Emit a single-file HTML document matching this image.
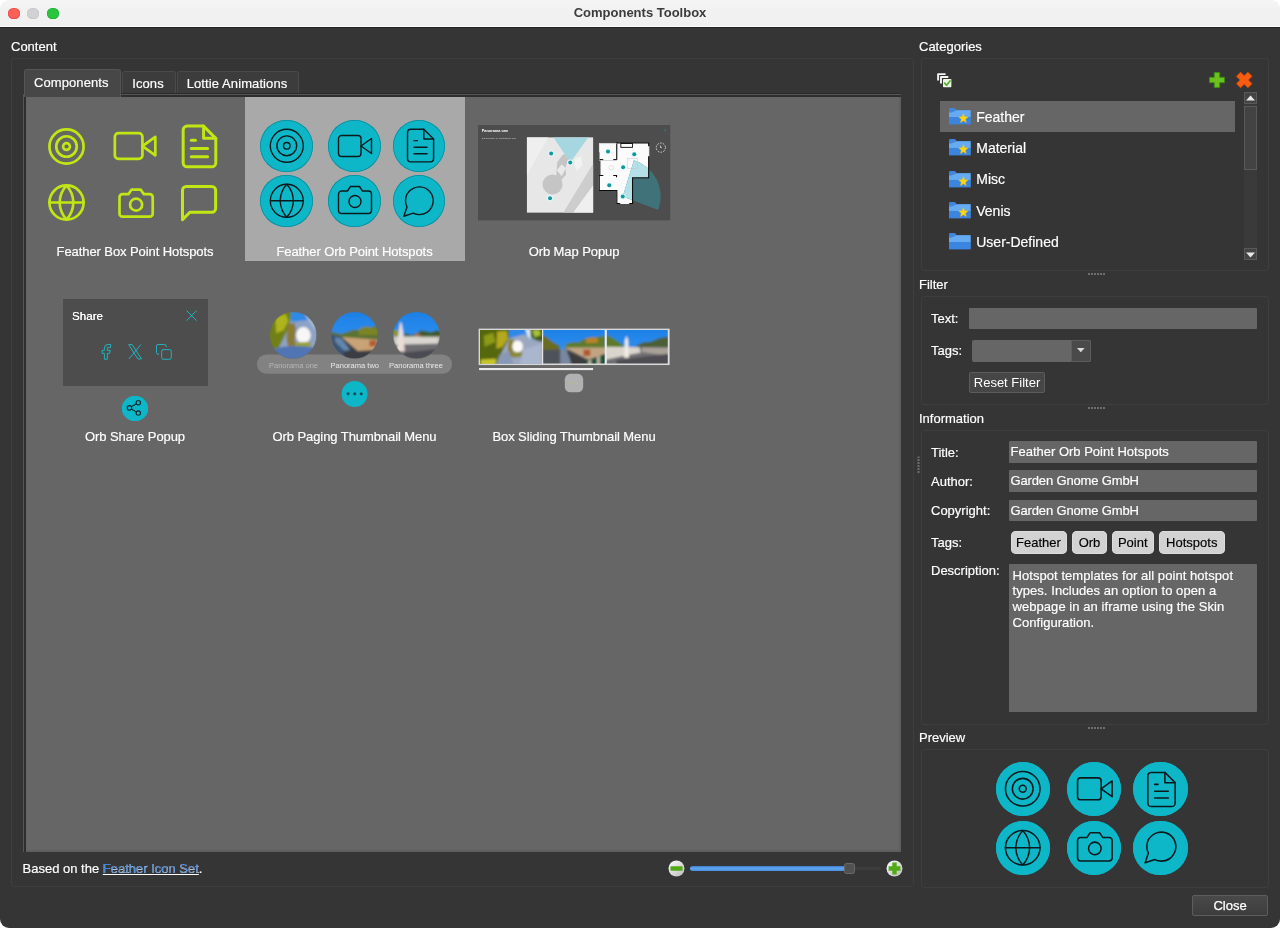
<!DOCTYPE html>
<html lang="en">
<head>
<meta charset="utf-8">
<title>Components Toolbox</title>
<style>
*{box-sizing:border-box;margin:0;padding:0}
html,body{width:1280px;height:928px;overflow:hidden;background:#fff}
body{font-family:"Liberation Sans",sans-serif;font-size:13px;color:#fff;-webkit-font-smoothing:antialiased}
#win{transform:translateZ(0);position:absolute;left:0;top:0;width:1280px;height:928px;background:linear-gradient(#f3f3f3 0,#f3f3f3 27px,#353535 27px);border-radius:9px;overflow:hidden}
#tbar{position:absolute;left:0;top:0;width:1280px;height:27px;background:linear-gradient(#f5f5f5,#f2f2f2 30%,#f0f0f0);border-bottom:1px solid #fdfdfd}
#tline{position:absolute;left:0;top:27px;width:1280px;height:1.3px;background:#222}
.tl{position:absolute;top:7.7px;width:11.7px;height:11.7px;border-radius:50%}
#ttl{position:absolute;left:0;width:1280px;top:4.7px;text-align:center;font-weight:bold;font-size:13px;color:#3b3b3b;letter-spacing:0}
.abs{position:absolute}
.lbl{position:absolute;white-space:nowrap;color:#fff;font-size:13px;line-height:15px}
.gb{position:absolute;border:1px solid #3e3e3e;border-radius:3px}
.field{position:absolute;background:linear-gradient(#666,#666);border-radius:1px;color:#fff;font-size:13px;line-height:21px;padding-left:2px;white-space:nowrap;overflow:hidden}
.tab{letter-spacing:.1px;padding-right:2px;position:absolute;background:linear-gradient(#3c3c3c,#3c3c3c);border:1px solid #4a4a4a;border-bottom:none;border-radius:3px 3px 0 0;text-align:center;font-size:13px;color:#fff}
.tile-l{letter-spacing:-.08px;position:absolute;width:220px;text-align:center;font-size:13px;line-height:15px;color:#fff;white-space:nowrap}
.orb{position:absolute;border-radius:50%;background:#0db7c8}
svg{position:absolute;overflow:visible}
svg svg{overflow:hidden}
.lbl,.tile-l,.row,.field,.tab{-webkit-text-stroke:.18px #fff}
.chip{-webkit-text-stroke:.15px #000}
.fi{fill:none;stroke-linecap:round;stroke-linejoin:round}
.dots{position:absolute;width:17px;height:2px;background:repeating-linear-gradient(90deg,#6e6e6e 0 2px,transparent 2px 3px)}
.chip{position:absolute;top:531px;height:23px;background:linear-gradient(#d2d2d2,#d2d2d2);border-radius:5px;color:#000;font-size:13px;line-height:23px;text-align:center;box-shadow:0 0 0 .5px #e6e6e6 inset}
.row{position:absolute;left:976.25px;font-size:14px;line-height:16px;color:#fff;white-space:nowrap}
</style>
</head>
<body>
<div id="win">
  <!-- title bar -->
  <div id="tbar">
    <div class="tl" style="left:8px;background:#fe5f57;box-shadow:0 0 0 .5px #e2463f inset"></div>
    <div class="tl" style="left:27.3px;background:#d1d0d2;box-shadow:0 0 0 .5px #c3c2c4 inset"></div>
    <div class="tl" style="left:47.1px;background:#29c440;box-shadow:0 0 0 .5px #1fa82f inset"></div>
    <div id="ttl">Components Toolbox</div>
  </div>
  <div id="tline"></div>

  <!-- ============ CONTENT ============ -->
  <div class="lbl" style="left:11px;top:38.75px">Content</div>
  <div class="gb" style="left:11px;top:58px;width:902.7px;height:829px"></div>

  <!-- tabs -->
  <div class="tab" style="left:122px;top:71px;width:54px;height:23px;line-height:23px">Icons</div>
  <div class="tab" style="left:177px;top:71px;width:122px;height:23px;line-height:23px">Lottie Animations</div>
  <div class="abs" style="left:23px;top:93px;width:878px;height:1.2px;background:#2a2a2a"></div>
  <div class="abs" style="left:23px;top:94.1px;width:878px;height:757.9px;background:#565656"></div>
  <div class="abs" style="left:24.2px;top:95.4px;width:876.8px;height:756.6px;background:#2e2e2e"></div>
  <div class="abs" style="left:25.5px;top:96.6px;width:875.5px;height:755.4px;background:#5f5f5f"></div>
  <div class="tab" style="left:23.5px;top:69px;width:97.5px;height:27.6px;line-height:25px;background:linear-gradient(#474747,#474747);border-color:#555">Components</div>

  <!-- list pane -->
  <div id="pane" class="abs" style="left:25.5px;top:96.6px;width:873.5px;height:753.4px;background:#666"></div>
  <div class="abs" style="left:244.75px;top:96.6px;width:219.75px;height:164px;background:#a9a9a9"></div>

  <svg class="fi" style="left:46.18px;top:125.88px" width="41.04" height="41.04" viewBox="0 0 24 24" stroke="#c0e714" stroke-width="1.579" ><circle cx="12" cy="12" r="10"/><circle cx="12" cy="12" r="6"/><circle cx="12" cy="12" r="2"/></svg>
<svg class="fi" style="left:113.12px;top:124.02px" width="44.16" height="44.16" viewBox="0 0 24 24" stroke="#c0e714" stroke-width="1.467" ><polygon points="23 7 16 12 23 17 23 7"/><rect x="1" y="5" width="15" height="14" rx="2" ry="2"/></svg>
<svg class="fi" style="left:174.92px;top:121.77px" width="48.96" height="48.96" viewBox="0 0 24 24" stroke="#c0e714" stroke-width="1.471" ><path d="M14 2H6a2 2 0 0 0-2 2v16a2 2 0 0 0 2 2h12a2 2 0 0 0 2-2V8z"/><polyline points="14 2 14 8 20 8"/><line x1="16" y1="13" x2="8" y2="13"/><line x1="16" y1="17" x2="8" y2="17"/><polyline points="10 9 9 9 8 9"/></svg>
<svg class="fi" style="left:46.48px;top:181.78px" width="41.04" height="41.04" viewBox="0 0 24 24" stroke="#c0e714" stroke-width="1.579" ><circle cx="12" cy="12" r="10"/><line x1="2" y1="12" x2="22" y2="12"/><path d="M12 2a15.3 15.3 0 0 1 4 10 15.3 15.3 0 0 1-4 10 15.3 15.3 0 0 1-4-10 15.3 15.3 0 0 1 4-10z"/></svg>
<svg class="fi" style="left:117.68px;top:184.63px" width="36.24" height="36.24" viewBox="0 0 24 24" stroke="#c0e714" stroke-width="1.788" ><path d="M23 19a2 2 0 0 1-2 2H3a2 2 0 0 1-2-2V8a2 2 0 0 1 2-2h4l2-3h6l2 3h4a2 2 0 0 1 2 2z"/><circle cx="12" cy="13" r="4"/></svg>
<svg class="fi" style="left:177.32px;top:181.12px" width="44.16" height="44.16" viewBox="0 0 24 24" stroke="#c0e714" stroke-width="1.630" ><path d="M21 15a2 2 0 0 1-2 2H7l-4 4V5a2 2 0 0 1 2-2h14a2 2 0 0 1 2 2z"/></svg>
<div class="tile-l" style="left:25px;top:244px">Feather Box Point Hotspots</div>
<div class="orb" style="left:260.30px;top:119.50px;width:52.40px;height:52.40px;box-shadow:0 0 0 .8px #0a8c9a inset"></div>
<svg class="fi" style="left:266.70px;top:125.90px" width="39.60" height="39.60" viewBox="0 0 24 24" stroke="#0c1a1d" stroke-width="0.848" ><circle cx="12" cy="12" r="10"/><circle cx="12" cy="12" r="6"/><circle cx="12" cy="12" r="2"/></svg>
<div class="orb" style="left:328.30px;top:119.50px;width:52.40px;height:52.40px;box-shadow:0 0 0 .8px #0a8c9a inset"></div>
<svg class="fi" style="left:337.40px;top:128.00px" width="36.00" height="36.00" viewBox="0 0 24 24" stroke="#0c1a1d" stroke-width="0.933" ><polygon points="23 7 16 12 23 17 23 7"/><rect x="1" y="5" width="15" height="14" rx="2" ry="2"/></svg>
<div class="orb" style="left:393.00px;top:119.50px;width:52.40px;height:52.40px;box-shadow:0 0 0 .8px #0a8c9a inset"></div>
<svg class="fi" style="left:400.54px;top:126.14px" width="39.12" height="39.12" viewBox="0 0 24 24" stroke="#0c1a1d" stroke-width="0.859" ><path d="M14 2H6a2 2 0 0 0-2 2v16a2 2 0 0 0 2 2h12a2 2 0 0 0 2-2V8z"/><polyline points="14 2 14 8 20 8"/><line x1="16" y1="13" x2="8" y2="13"/><line x1="16" y1="17" x2="8" y2="17"/><polyline points="10 9 9 9 8 9"/></svg>
<div class="orb" style="left:260.30px;top:175.00px;width:52.40px;height:52.40px;box-shadow:0 0 0 .8px #0a8c9a inset"></div>
<svg class="fi" style="left:266.70px;top:181.40px" width="39.60" height="39.60" viewBox="0 0 24 24" stroke="#0c1a1d" stroke-width="0.848" ><circle cx="12" cy="12" r="10"/><line x1="2" y1="12" x2="22" y2="12"/><path d="M12 2a15.3 15.3 0 0 1 4 10 15.3 15.3 0 0 1-4 10 15.3 15.3 0 0 1-4-10 15.3 15.3 0 0 1 4-10z"/></svg>
<div class="orb" style="left:328.30px;top:175.00px;width:52.40px;height:52.40px;box-shadow:0 0 0 .8px #0a8c9a inset"></div>
<svg class="fi" style="left:337.40px;top:182.10px" width="36.00" height="36.00" viewBox="0 0 24 24" stroke="#0c1a1d" stroke-width="0.933" ><path d="M23 19a2 2 0 0 1-2 2H3a2 2 0 0 1-2-2V8a2 2 0 0 1 2-2h4l2-3h6l2 3h4a2 2 0 0 1 2 2z"/><circle cx="12" cy="13" r="4"/></svg>
<div class="orb" style="left:393.00px;top:175.00px;width:52.40px;height:52.40px;box-shadow:0 0 0 .8px #0a8c9a inset"></div>
<svg class="fi" style="left:399.34px;top:181.64px" width="39.12" height="39.12" viewBox="0 0 24 24" stroke="#0c1a1d" stroke-width="0.859" ><path d="M21 11.5a8.38 8.38 0 0 1-.9 3.8 8.5 8.5 0 0 1-7.6 4.7 8.38 8.38 0 0 1-3.8-.9L3 21l1.9-5.7a8.38 8.38 0 0 1-.9-3.8 8.5 8.5 0 0 1 4.7-7.6 8.38 8.38 0 0 1 3.8-.9h.5a8.48 8.48 0 0 1 8 8v.5z"/></svg>
<div class="tile-l" style="left:244.5px;top:244px">Feather Orb Point Hotspots</div>
<div class="tile-l" style="left:464px;top:244px">Orb Map Popup</div>
<div class="tile-l" style="left:25px;top:429px">Orb Share Popup</div>
<div class="tile-l" style="left:244.5px;top:429px">Orb Paging Thumbnail Menu</div>
<div class="tile-l" style="left:464px;top:429px">Box Sliding Thumbnail Menu</div>
  <svg style="left:477.75px;top:124.75px" width="192.25" height="95.35" viewBox="477.75 124.75 192.25 95.35"><rect x="477.75" y="124.75" width="192.25" height="95.35" fill="#4d4d4d"/><clipPath id="mapc"><rect x="526.5" y="136.9" width="66.6" height="75.7"/></clipPath><g clip-path="url(#mapc)"><rect x="526.5" y="136.9" width="66.6" height="75.7" fill="#e7e7e7"/><path d="M526.5 136.9H548L526.5 175Z" fill="#efefef"/><path d="M563 212.6L593.1 163V185L573 212.6Z" fill="#cdcdcd"/><path d="M573 212.6L593.1 185V212.6Z" fill="#efefef"/><path d="M575 158l6-2 1 9-5 6-3-6z" fill="#f2f2f2"/><circle cx="552.3" cy="184.3" r="10" fill="#c5c5c5"/><path d="M556 175l1-13 5-7 4-2 2 6-3 9 1 6-5 6z" fill="#c5c5c5"/><path d="M556.5 170l5-6 4 4-4 8z" fill="#e9e9e9"/><path d="M553.1 136.9H588.1L570 162.25Z" fill="#a6d6df"/></g><circle cx="550.9" cy="153.25" r="3.1" fill="#e4f6f8"/><circle cx="550.9" cy="153.25" r="2" fill="#0e9a9c"/><circle cx="570" cy="162.25" r="3.1" fill="#e4f6f8"/><circle cx="570" cy="162.25" r="2" fill="#0e9a9c"/><circle cx="549.75" cy="197.9" r="3.1" fill="#e4f6f8"/><circle cx="549.75" cy="197.9" r="2" fill="#0e9a9c"/><clipPath id="flc"><path d="M598.75 142.9H616.9V142.25H648.75V177.9H632.5V203.5H616.25V190.4H598.5V174.75H600.25V160.4H598.75Z"/></clipPath><path d="M598.75 142.9H616.9V142.25H648.75V177.9H632.5V203.5H616.25V190.4H598.5V174.75H600.25V160.4H598.75Z" fill="#fbfbfb"/><path d="M622.5 196.25L633.7 159.95A38 38 0 0 1 658 209.7Z" fill="#3f7379"/><g clip-path="url(#flc)"><path d="M622.5 196.25L633.7 159.95A38 38 0 0 1 658 209.7Z" fill="#b4e0e8"/></g><g fill="none" stroke="#0b0b0b" stroke-width="1.1" stroke-linejoin="miter"><path d="M616.5 159.6V142.6H648.4V177.6H632.3V203.2H616.6V190.2H599V175.2H616.3V177"/><path d="M599.2 159.4H616.5"/><path d="M599.2 160V152" stroke-width=".9" stroke="#0b0b0b"/><rect x="620.6" y="143.2" width="11.6" height="3.9" stroke-width=".9"/></g><path d="M599.2 159.4V143.3H616.5" fill="none" stroke="#d9d9d9" stroke-width=".7"/><path d="M603 159.4H613M603 175.2H613M620 203.2H629" stroke="#fbfbfb" stroke-width="1.3"/><path d="M648.4 146V156" stroke="#f2f2f2" stroke-width="1.4"/><rect x="627.5" y="158.5" width="10" height="10" fill="none" stroke="#bdbdbd" stroke-width=".4"/><circle cx="611" cy="167.5" r="2.3" fill="none" stroke="#d8b9b9" stroke-width=".4"/><circle cx="607.75" cy="151.25" r="2.9" fill="#e6f8fa"/><circle cx="607.75" cy="151.25" r="2" fill="#0e9a9c"/><circle cx="634" cy="153.9" r="2.9" fill="#e6f8fa"/><circle cx="634" cy="153.9" r="2" fill="#0e9a9c"/><circle cx="622.9" cy="167" r="2.9" fill="#e6f8fa"/><circle cx="622.9" cy="167" r="2" fill="#0e9a9c"/><circle cx="609" cy="184.9" r="2.9" fill="#e6f8fa"/><circle cx="609" cy="184.9" r="2" fill="#0e9a9c"/><circle cx="622.5" cy="196.25" r="2.9" fill="#e6f8fa"/><circle cx="622.5" cy="196.25" r="2" fill="#0e9a9c"/><circle cx="660.6" cy="147.4" r="4.6" fill="none" stroke="#d8d8d8" stroke-width="1" stroke-dasharray="1.6 1.3"/><path d="M660 144.5l1.6 3.4-1.4-.4z" fill="#fff"/><path d="M663.6 128.8l2.6 2.6m0-2.6l-2.6 2.6" stroke="#2a9aa4" stroke-width=".55" opacity=".7"/><text x="481.5" y="132" font-size="3.9" font-weight="bold" fill="#fff" font-family="Liberation Sans,sans-serif" textLength="26.5" lengthAdjust="spacingAndGlyphs">Panorama one</text><text x="481.5" y="138.3" font-size="2.3" fill="#d0d0d0" font-family="Liberation Sans,sans-serif" textLength="34.5" lengthAdjust="spacingAndGlyphs">Description of Panorama one</text></svg>
<div class="abs" style="left:63px;top:298.75px;width:144.75px;height:86.85px;background:#4d4d4d"></div>
<div class="abs" style="left:72px;top:309.3px;font-size:11.6px;line-height:13px;color:#fff;text-shadow:0 0 .3px #fff">Share</div>
<svg class="fi" style="left:181.60px;top:305.90px" width="19.20" height="19.20" viewBox="0 0 24 24" stroke="#21b3bf" stroke-width="1.250" ><line x1="18" y1="6" x2="6" y2="18"/><line x1="6" y1="6" x2="18" y2="18"/></svg>
<svg class="fi" style="left:97.02px;top:342.82px" width="17.76" height="17.76" viewBox="0 0 24 24" stroke="#21b3bf" stroke-width="1.351" ><path d="M18 2h-3a5 5 0 0 0-5 5v3H7v4h3v8h4v-8h3l1-4h-4V7a1 1 0 0 1 1-1h3z"/></svg>
<svg style="left:128px;top:344.2px" width="14.2" height="15.6" viewBox="0 0 14.2 15.6" fill="none" stroke="#21b3bf" stroke-width="1" stroke-linejoin="round"><path d="M.7 .6H4.2L13.5 15H10Z"/><path d="M12.9 .6L.9 15"/></svg>
<svg class="fi" style="left:154.72px;top:343.22px" width="17.76" height="17.76" viewBox="0 0 24 24" stroke="#21b3bf" stroke-width="1.351" ><rect x="9" y="9" width="13" height="13" rx="2" ry="2"/><path d="M5 15H4a2 2 0 0 1-2-2V4a2 2 0 0 1 2-2h9a2 2 0 0 1 2 2v1"/></svg>
<div class="orb" style="left:122.25px;top:395.55px;width:25.90px;height:25.90px;box-shadow:0 0 0 .8px #0db7c8 inset"></div>
<svg class="fi" style="left:125.12px;top:399.17px" width="17.76" height="17.76" viewBox="0 0 24 24" stroke="#0c2a30" stroke-width="1.486" ><circle cx="18" cy="5" r="3"/><circle cx="6" cy="12" r="3"/><circle cx="18" cy="19" r="3"/><line x1="8.59" y1="13.51" x2="15.42" y2="17.49"/><line x1="15.41" y1="6.51" x2="8.59" y2="10.49"/></svg>
<svg style="left:250px;top:305px" width="210" height="110" viewBox="250 305 210 110"><rect x="256.9" y="354.4" width="195.2" height="19.4" rx="9.7" fill="#828282"/><defs><linearGradient id="sky" x1="0" y1="0" x2="0" y2="1"><stop offset="0" stop-color="#1b7fe6"/><stop offset=".6" stop-color="#2f8fee"/><stop offset="1" stop-color="#8cc2f2"/></linearGradient><filter id="bl1" x="-5%" y="-5%" width="110%" height="110%"><feGaussianBlur stdDeviation="12"/></filter><filter id="bl3" x="-5%" y="-5%" width="110%" height="110%"><feGaussianBlur stdDeviation="17"/></filter><clipPath id="c1"><circle cx="312" cy="312" r="250"/></clipPath><clipPath id="c2"><circle cx="967" cy="312" r="250"/></clipPath><clipPath id="c3"><circle cx="502" cy="453" r="363"/></clipPath></defs><svg x="269.8" y="311.8" width="46.9" height="46.9" viewBox="62 62 500 500"><g clip-path="url(#c1)"><g filter="url(#bl1)"><rect x="40" y="40" width="560" height="560" fill="#8fa2c6"/><path d="M240 40H600V260L540 250 470 150 300 170Z" fill="#2f8ae6"/><path d="M420 60l150 40 30 160-60-10-70-100z" fill="#a9bcd8"/><path d="M40 40H290L280 170 230 300 150 460 40 480Z" fill="#6f8012"/><path d="M120 120l110-40 30 80-50 100-80 30z" fill="#aeb41c"/><path d="M250 200l70-20 20 60-10 120 20 100-80 20-30-120z" fill="#8a7a34"/><ellipse cx="420" cy="312" rx="78" ry="88" fill="#f7f7f5"/><path d="M335 390l160-10 10 50-170 20z" fill="#98a032"/><path d="M120 450q180-40 400-10l40 150H100z" fill="#4f74b4"/></g></g></svg><svg x="331.15" y="311.8" width="46.9" height="46.9" viewBox="717 62 500 500"><g clip-path="url(#c2)"><g filter="url(#bl1)"><rect x="700" y="40" width="540" height="560" fill="url(#sky)"/><path d="M700 270l120 30 60-20 80-30 60 10 60-40 60 10 50-20 50 20v130H700z" fill="#5c7230"/><path d="M1010 250l60-30 80 10 70 10v70h-210z" fill="#7c8428"/><path d="M700 300l130 30 170 150 110 60-140 60H700z" fill="#3a5478"/><path d="M830 330l390 30-20 110-190 20z" fill="#c9a274"/><path d="M1125 368h75v62h-75z" fill="#b25a30"/><path d="M830 340l170 140 200-10-40 130H860z" fill="#3a3e44"/><path d="M760 330l70 20 90 120-60 10-100-100z" fill="#6486ac"/></g></g></svg><svg x="393.0" y="311.8" width="46.96" height="46.96" viewBox="139 90 726 726"><g clip-path="url(#c3)"><g filter="url(#bl3)"><rect x="100" y="60" width="800" height="800" fill="url(#sky)"/><path d="M100 380l120-10v100H100z" fill="#8a9424"/><path d="M320 420l120 30 60-20 70-50 90 10 60 20 80-30 100 10v130H320z" fill="#3f5a28"/><path d="M480 430h80v40h-80z" fill="#b46a30"/><path d="M100 470h800v160H100z" fill="#bdb9b4"/><path d="M180 480l320-10 110 20 220 0v110l-330 10-320 60z" fill="#d9d5d0"/><path d="M100 600l800-20v300H100z" fill="#6e6e72"/><path d="M300 720l560-60v200H300z" fill="#4c4c52"/><path d="M260 235l18 60 18 110 26 300H198l26-300 18-110z" fill="#e9ddd6"/></g></g></svg><circle cx="293.3" cy="335.3" r="23.3" fill="none" stroke="#666" stroke-opacity=".4" stroke-width="1"/><circle cx="354.6" cy="335.3" r="23.3" fill="none" stroke="#666" stroke-opacity=".4" stroke-width="1"/><circle cx="416.5" cy="335.3" r="23.3" fill="none" stroke="#666" stroke-opacity=".4" stroke-width="1"/><text x="269" y="368.4" font-size="7.1" fill="#b6b6b6" font-family="Liberation Sans,sans-serif" textLength="49" lengthAdjust="spacingAndGlyphs">Panorama one</text><text x="330.6" y="368.4" font-size="7.1" fill="#e9e9e9" font-family="Liberation Sans,sans-serif" textLength="48.4" lengthAdjust="spacingAndGlyphs">Panorama two</text><text x="389" y="368.4" font-size="7.1" fill="#e9e9e9" font-family="Liberation Sans,sans-serif" textLength="54" lengthAdjust="spacingAndGlyphs">Panorama three</text><circle cx="354.6" cy="394" r="12.95" fill="#0db7c8"/><circle cx="348.1" cy="393.8" r="1.55" fill="#0a4f60"/><circle cx="354.75" cy="393.8" r="1.55" fill="#0a4f60"/><circle cx="361.25" cy="393.8" r="1.55" fill="#0a4f60"/></svg>
<svg style="left:475px;top:325px" width="200" height="72" viewBox="475 325 200 72"><defs><filter id="bb1" x="-5%" y="-5%" width="110%" height="110%"><feGaussianBlur stdDeviation="12"/></filter><filter id="bb2" x="-5%" y="-5%" width="110%" height="110%"><feGaussianBlur stdDeviation="9"/></filter></defs><rect x="479.1" y="329.1" width="190" height="35.5" fill="#dedede"/><svg x="479.9" y="329.9" width="62.1" height="34" viewBox="50 75 795 435" preserveAspectRatio="none"><g filter="url(#bb1)"><rect x="0" y="30" width="900" height="520" fill="#9ca8c0"/><path d="M400 30H720V210L620 130 420 185Z" fill="#2f88e8"/><path d="M630 60l70 10 10 130-50-40z" fill="#dfeaf6"/><path d="M0 30H415L425 180 330 360 265 520H0Z" fill="#56680f"/><path d="M270 95l120-10 20 100-70 110-80 20z" fill="#b4a81e"/><path d="M100 150l120-40 30 120-140 60z" fill="#8c9a18"/><path d="M60 455l200-10-10 80H60z" fill="#c6c62a"/><path d="M695 30H900V235L780 215 700 170Z" fill="#42601a"/><path d="M720 80l90-10 20 70-80 30z" fill="#a8c03a"/><path d="M420 200l60-10-5 90 10 130-50 20-30-110z" fill="#8e8030"/><ellipse cx="532" cy="288" rx="68" ry="78" fill="#fafaf8"/><path d="M470 360l140-5 5 60-140 15z" fill="#8c8a34"/><path d="M600 330l250-80v280H560z" fill="#a9b6cc"/><path d="M300 400l120-60 60 170H260z" fill="#8a98b8"/></g></svg><svg x="542.7" y="330" width="62.05" height="33.6" viewBox="25 55 567 307" preserveAspectRatio="none"><g filter="url(#bb2)"><rect x="-10" y="30" width="640" height="360" fill="url(#sky)"/><path d="M-10 100l60 10 60 50 70 40v60H-10z" fill="#6b6c24"/><path d="M230 190l60-25 60 5 50-30 60-20 60 0 80-15v140H230z" fill="#5f7a2c"/><path d="M420 135l60-12 50 8v40l-110 4z" fill="#b8842a"/><path d="M-10 235h640v160H-10z" fill="#4e5258"/><path d="M185 232l70 0 30 140h-100z" fill="#7888a0"/><path d="M225 215l405 0v60l-190 50z" fill="#c2a484"/><path d="M398 235h62v56h-62z" fill="#b0552c"/><path d="M240 240l200 95-60 40H300z" fill="#3c3c3e"/><path d="M410 340l220-80v130H400z" fill="#25503a"/><path d="M440 335l30-15v60h-30zM520 300l28-12v90h-28z" fill="#b9b4a2"/></g></svg><svg x="606.7" y="330" width="61.05" height="33.6" viewBox="610 55 558 307" preserveAspectRatio="none"><g filter="url(#bb2)"><rect x="580" y="30" width="620" height="360" fill="url(#sky)"/><path d="M580 110l60 0 60 40 60 40v40H580z" fill="#5c7a2a"/><path d="M880 200l60-30 80-10 70-30 110-20v140H880z" fill="#4b5f34"/><path d="M580 210h620v180H580z" fill="#6f6e72"/><path d="M580 208l330 4 10 50-140 25-200 45z" fill="#d9d5cd"/><path d="M930 215l270 5v75l-270-40z" fill="#a9a196"/><path d="M700 330l500-60v130H700z" fill="#4e4e52"/><path d="M792 108l14 40 8 160h-46l8-160z" fill="#efebe3"/></g></svg><rect x="542.1" y="329.5" width="1.1" height="34.6" fill="#e9e9e9"/><rect x="604.9" y="329.5" width="1.7" height="34.6" fill="#e9e9e9"/><rect x="479.1" y="329.1" width="190" height="35.5" fill="none" stroke="#dedede" stroke-width=".9"/><rect x="479.1" y="368" width="114" height="2.1" fill="#ebebeb"/><rect x="564.8" y="373.8" width="18.4" height="18.5" rx="5.5" fill="#b1b1b1"/><circle cx="570.8" cy="383" r=".8" fill="#bccb6a" opacity=".7"/><circle cx="574" cy="383" r=".8" fill="#bccb6a" opacity=".7"/><circle cx="577.2" cy="383" r=".8" fill="#bccb6a" opacity=".7"/></svg>

  <!-- footer -->
  <div class="lbl" style="left:22.5px;top:861px">Based on the <span style="color:#3f82d6;text-decoration:underline">Feather Icon Set</span>.</div>
  <!-- zoom slider -->
  <div class="abs" style="left:689.5px;top:865.5px;width:192px;height:5px;border-radius:2.5px;background:#3d3d3d;box-shadow:0 0 0 .5px #2e2e2e inset"></div>
  <div class="abs" style="left:689.5px;top:865.5px;width:156px;height:5px;border-radius:2.5px;background:linear-gradient(#3a7bd0,#62a6f0 45%,#4a8fe0)"></div>
  <div class="abs" style="left:843.5px;top:862.5px;width:11.5px;height:11.5px;border-radius:2.5px;background:#515151;border:1px solid #6b6b6b"></div>
  <svg style="left:667.5px;top:860px" width="17" height="17" viewBox="0 0 17 17"><defs><linearGradient id="zg" x1="0" y1="0" x2="1" y2="1"><stop offset="0" stop-color="#ffffff"/><stop offset="1" stop-color="#b9b9b9"/></linearGradient></defs><circle cx="8.5" cy="8.5" r="8" fill="url(#zg)"/><rect x="2.4" y="6.3" width="12.2" height="4.4" rx=".8" fill="#50aa14"/></svg>
  <svg style="left:886px;top:860px" width="17" height="17" viewBox="0 0 17 17"><circle cx="8.5" cy="8.5" r="8" fill="url(#zg)"/><path d="M2.6 6.3h3.7V2.6h4.4v3.7h3.7v4.4h-3.7v3.7H6.3v-3.7H2.6z" fill="#50aa14"/></svg>

  <!-- ============ RIGHT ============ -->
  <!-- Categories -->
  <div class="lbl" style="left:919px;top:39px">Categories</div>
  <div class="gb" style="left:921px;top:58px;width:348px;height:213px"></div>
  <div class="abs" style="left:939.5px;top:100.5px;width:295.5px;height:31.5px;background:#666"></div>
  <div class="row" style="top:109px">Feather</div>
  <div class="row" style="top:140.2px">Material</div>
  <div class="row" style="top:171.4px">Misc</div>
  <div class="row" style="top:202.6px">Venis</div>
  <div class="row" style="top:233.6px">User-Defined</div>
  <svg style="left:949.2px;top:108.2px" width="21.6" height="16.2" viewBox="0 0 21.6 16.2"><path d="M0 1.4Q0 0 1.4 0H5.2Q6.2 0 6.8 .9L7.7 2.2H21.6V16.2H0Z" fill="#3f86dc"/><path d="M0 4.6Q3 4.8 5.2 3.6 7 2.4 8.6 2.3H21.6V9.2H0Z" fill="#66abf1"/><rect x="0" y="9" width="21.6" height="7.2" fill="#3b85e0"/><polygon points="14.40,5.70 15.69,8.82 19.06,9.09 16.49,11.28 17.28,14.56 14.40,12.80 11.52,14.56 12.31,11.28 9.74,9.09 13.11,8.82" fill="#fbd712" stroke="#f0b90f" stroke-width=".5" stroke-linejoin="round"/></svg>
<svg style="left:949.2px;top:139.4px" width="21.6" height="16.2" viewBox="0 0 21.6 16.2"><path d="M0 1.4Q0 0 1.4 0H5.2Q6.2 0 6.8 .9L7.7 2.2H21.6V16.2H0Z" fill="#3f86dc"/><path d="M0 4.6Q3 4.8 5.2 3.6 7 2.4 8.6 2.3H21.6V9.2H0Z" fill="#66abf1"/><rect x="0" y="9" width="21.6" height="7.2" fill="#3b85e0"/><polygon points="14.40,5.70 15.69,8.82 19.06,9.09 16.49,11.28 17.28,14.56 14.40,12.80 11.52,14.56 12.31,11.28 9.74,9.09 13.11,8.82" fill="#fbd712" stroke="#f0b90f" stroke-width=".5" stroke-linejoin="round"/></svg>
<svg style="left:949.2px;top:170.6px" width="21.6" height="16.2" viewBox="0 0 21.6 16.2"><path d="M0 1.4Q0 0 1.4 0H5.2Q6.2 0 6.8 .9L7.7 2.2H21.6V16.2H0Z" fill="#3f86dc"/><path d="M0 4.6Q3 4.8 5.2 3.6 7 2.4 8.6 2.3H21.6V9.2H0Z" fill="#66abf1"/><rect x="0" y="9" width="21.6" height="7.2" fill="#3b85e0"/><polygon points="14.40,5.70 15.69,8.82 19.06,9.09 16.49,11.28 17.28,14.56 14.40,12.80 11.52,14.56 12.31,11.28 9.74,9.09 13.11,8.82" fill="#fbd712" stroke="#f0b90f" stroke-width=".5" stroke-linejoin="round"/></svg>
<svg style="left:949.2px;top:201.8px" width="21.6" height="16.2" viewBox="0 0 21.6 16.2"><path d="M0 1.4Q0 0 1.4 0H5.2Q6.2 0 6.8 .9L7.7 2.2H21.6V16.2H0Z" fill="#3f86dc"/><path d="M0 4.6Q3 4.8 5.2 3.6 7 2.4 8.6 2.3H21.6V9.2H0Z" fill="#66abf1"/><rect x="0" y="9" width="21.6" height="7.2" fill="#3b85e0"/><polygon points="14.40,5.70 15.69,8.82 19.06,9.09 16.49,11.28 17.28,14.56 14.40,12.80 11.52,14.56 12.31,11.28 9.74,9.09 13.11,8.82" fill="#fbd712" stroke="#f0b90f" stroke-width=".5" stroke-linejoin="round"/></svg>
<svg style="left:949.2px;top:233.0px" width="21.6" height="16.2" viewBox="0 0 21.6 16.2"><path d="M0 1.4Q0 0 1.4 0H5.2Q6.2 0 6.8 .9L7.7 2.2H21.6V16.2H0Z" fill="#3f86dc"/><path d="M0 4.6Q3 4.8 5.2 3.6 7 2.4 8.6 2.3H21.6V9.2H0Z" fill="#66abf1"/><rect x="0" y="9" width="21.6" height="7.2" fill="#3b85e0"/></svg>
<svg style="left:937px;top:73px" width="15" height="14.5" viewBox="0 0 15 14.5"><path d="M1.1 7.4V1.1H8.6" fill="none" stroke="#f4f4f4" stroke-width="1.9" stroke-linejoin="round"/><path d="M4 10.5V4H11.3" fill="none" stroke="#f4f4f4" stroke-width="1.9" stroke-linejoin="round"/><rect x="6" y="6" width="8.4" height="8.2" rx=".8" fill="#eaf6e2"/><path d="M7.6 10.2l2 2 3.4-4.2" fill="none" stroke="#58ad32" stroke-width="1.7" stroke-linecap="round" stroke-linejoin="round"/></svg>
<svg style="left:1208.5px;top:72px" width="16" height="16" viewBox="0 0 16 16"><path d="M5.3 .5h5.4v4.8h4.8v5.4h-4.8v4.8H5.3v-4.8H.5V5.3h4.8z" fill="#6cc01d" stroke="#3a8a10" stroke-width=".9" stroke-linejoin="round"/></svg>
<svg style="left:1236px;top:72px" width="16.5" height="16" viewBox="0 0 16 16"><path d="M5.3 .5h5.4v4.8h4.8v5.4h-4.8v4.8H5.3v-4.8H.5V5.3h4.8z" fill="#f95c0e" stroke="#d9480a" stroke-width=".7" stroke-linejoin="round" transform="rotate(45 8 8) scale(1.08) translate(-.6 -.6)"/></svg>
  <!-- scrollbar -->
  <div class="abs" style="left:1244px;top:92px;width:13px;height:168px;background:#3a3a3a"></div>
  <div class="abs" style="left:1244px;top:92px;width:13px;height:12px;background:#444;border:1px solid #595959"></div>
  <div class="abs" style="left:1244px;top:105.5px;width:13px;height:64px;background:#434343;border:1px solid #595959"></div>
  <div class="abs" style="left:1244px;top:248px;width:13px;height:12px;background:#444;border:1px solid #595959"></div>
  <svg style="left:1246px;top:95px" width="9" height="6" viewBox="0 0 9 6"><path d="M0 5.5L4.5 .5 9 5.5z" fill="#e8e8e8"/></svg>
  <svg style="left:1246px;top:251.5px" width="9" height="6" viewBox="0 0 9 6"><path d="M0 .5L4.5 5.5 9 .5z" fill="#e8e8e8"/></svg>
  <div class="dots" style="left:1088px;top:273px"></div>

  <!-- Filter -->
  <div class="lbl" style="left:919px;top:277px">Filter</div>
  <div class="gb" style="left:921px;top:295.5px;width:348px;height:109.5px"></div>
  <div class="lbl" style="left:931px;top:311px">Text:</div>
  <div class="field" style="left:968.5px;top:307.5px;width:288px;height:21.5px"></div>
  <div class="lbl" style="left:931px;top:343px">Tags:</div>
  <div class="abs" style="left:971.5px;top:340px;width:119.5px;height:21.5px;background:#666;border-radius:2px"></div>
  <div class="abs" style="left:1071px;top:340px;width:20px;height:21.5px;background:#4a4a4a;border:1px solid #5c5c5c;border-radius:0 2px 2px 0"></div>
  <svg style="left:1077.2px;top:348.3px" width="7.6" height="4.4" viewBox="0 0 9 5"><path d="M0 0h9L4.5 5z" fill="#dcdcdc"/></svg>
  <div class="abs" style="left:969px;top:372px;width:76px;height:21px;background:linear-gradient(#464646,#464646);border:1px solid #5c5c5c;border-radius:2px;text-align:center;line-height:19px;font-size:13px">Reset Filter</div>
  <div class="dots" style="left:1088px;top:407px"></div>

  <!-- Information -->
  <div class="lbl" style="left:919px;top:410.5px">Information</div>
  <div class="gb" style="left:921px;top:430px;width:348px;height:295px"></div>
  <div class="dots" style="left:909.5px;top:464px;transform:rotate(90deg)"></div>
  <div class="lbl" style="left:931px;top:444.5px">Title:</div>
  <div class="field" style="left:1008.5px;top:441px;width:248px;height:21.5px">Feather Orb Point Hotspots</div>
  <div class="lbl" style="left:931px;top:474px">Author:</div>
  <div class="field" style="left:1008.5px;top:470.25px;width:248px;height:21.5px;letter-spacing:-.15px">Garden Gnome GmbH</div>
  <div class="lbl" style="left:931px;top:503px">Copyright:</div>
  <div class="field" style="left:1008.5px;top:499.5px;width:248px;height:21.5px;letter-spacing:-.15px">Garden Gnome GmbH</div>
  <div class="lbl" style="left:931px;top:535px">Tags:</div>
  <div class="chip" style="left:1010.5px;width:56px">Feather</div>
  <div class="chip" style="left:1072px;width:35px">Orb</div>
  <div class="chip" style="left:1112px;width:41.5px">Point</div>
  <div class="chip" style="left:1159px;width:65.5px">Hotspots</div>
  <div class="lbl" style="left:931px;top:563px">Description:</div>
  <div class="field" style="left:1008.5px;top:564px;width:248px;height:147.5px;white-space:normal;line-height:15.6px;padding:3.9px 0 0 4px;letter-spacing:.06px">Hotspot templates for all point hotspot<br>types. Includes an option to open a<br>webpage in an iframe using the Skin<br>Configuration.</div>
  <div class="dots" style="left:1088px;top:726.5px"></div>

  <!-- Preview -->
  <div class="lbl" style="left:919px;top:730px">Preview</div>
  <div class="gb" style="left:921px;top:748.5px;width:348px;height:139px"></div>
  <div class="orb" style="left:995.62px;top:761.88px;width:54.25px;height:54.25px;box-shadow:0 0 0 .8px #0db7c8 inset"></div>
<svg class="fi" style="left:1002.01px;top:768.26px" width="41.47" height="41.47" viewBox="0 0 24 24" stroke="#0c1a1d" stroke-width="0.897" ><circle cx="12" cy="12" r="10"/><circle cx="12" cy="12" r="6"/><circle cx="12" cy="12" r="2"/></svg>
<div class="orb" style="left:1066.62px;top:761.88px;width:54.25px;height:54.25px;box-shadow:0 0 0 .8px #0db7c8 inset"></div>
<svg class="fi" style="left:1075.84px;top:770.46px" width="37.70" height="37.70" viewBox="0 0 24 24" stroke="#0c1a1d" stroke-width="0.987" ><polygon points="23 7 16 12 23 17 23 7"/><rect x="1" y="5" width="15" height="14" rx="2" ry="2"/></svg>
<div class="orb" style="left:1133.38px;top:761.88px;width:54.25px;height:54.25px;box-shadow:0 0 0 .8px #0db7c8 inset"></div>
<svg class="fi" style="left:1140.96px;top:768.51px" width="40.97" height="40.97" viewBox="0 0 24 24" stroke="#0c1a1d" stroke-width="0.908" ><path d="M14 2H6a2 2 0 0 0-2 2v16a2 2 0 0 0 2 2h12a2 2 0 0 0 2-2V8z"/><polyline points="14 2 14 8 20 8"/><line x1="16" y1="13" x2="8" y2="13"/><line x1="16" y1="17" x2="8" y2="17"/><polyline points="10 9 9 9 8 9"/></svg>
<div class="orb" style="left:995.62px;top:820.62px;width:54.25px;height:54.25px;box-shadow:0 0 0 .8px #0db7c8 inset"></div>
<svg class="fi" style="left:1002.01px;top:827.01px" width="41.47" height="41.47" viewBox="0 0 24 24" stroke="#0c1a1d" stroke-width="0.897" ><circle cx="12" cy="12" r="10"/><line x1="2" y1="12" x2="22" y2="12"/><path d="M12 2a15.3 15.3 0 0 1 4 10 15.3 15.3 0 0 1-4 10 15.3 15.3 0 0 1-4-10 15.3 15.3 0 0 1 4-10z"/></svg>
<div class="orb" style="left:1066.62px;top:820.62px;width:54.25px;height:54.25px;box-shadow:0 0 0 .8px #0db7c8 inset"></div>
<svg class="fi" style="left:1075.84px;top:827.75px" width="37.70" height="37.70" viewBox="0 0 24 24" stroke="#0c1a1d" stroke-width="0.987" ><path d="M23 19a2 2 0 0 1-2 2H3a2 2 0 0 1-2-2V8a2 2 0 0 1 2-2h4l2-3h6l2 3h4a2 2 0 0 1 2 2z"/><circle cx="12" cy="13" r="4"/></svg>
<div class="orb" style="left:1133.38px;top:820.62px;width:54.25px;height:54.25px;box-shadow:0 0 0 .8px #0db7c8 inset"></div>
<svg class="fi" style="left:1139.70px;top:827.26px" width="40.97" height="40.97" viewBox="0 0 24 24" stroke="#0c1a1d" stroke-width="0.908" ><path d="M21 11.5a8.38 8.38 0 0 1-.9 3.8 8.5 8.5 0 0 1-7.6 4.7 8.38 8.38 0 0 1-3.8-.9L3 21l1.9-5.7a8.38 8.38 0 0 1-.9-3.8 8.5 8.5 0 0 1 4.7-7.6 8.38 8.38 0 0 1 3.8-.9h.5a8.48 8.48 0 0 1 8 8v.5z"/></svg>

  <!-- Close -->
  <div class="abs" style="left:1192px;top:895px;width:76px;height:21px;background:linear-gradient(#494949,#3d3d3d);border:1px solid #5d5d5d;border-radius:2px;text-align:center;line-height:19px;font-size:13px;-webkit-text-stroke:.25px #fff">Close</div>
</div>
</body>
</html>
